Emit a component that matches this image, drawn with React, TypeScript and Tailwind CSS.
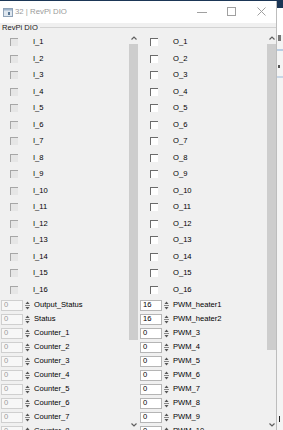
import React from "react";

const inputs = Array.from({ length: 16 }, (_, i) => `I_${i + 1}`);
const outputs = Array.from({ length: 16 }, (_, i) => `O_${i + 1}`);
const leftSpins = [
  "Output_Status",
  "Status",
  ...Array.from({ length: 8 }, (_, i) => `Counter_${i + 1}`),
];
const rightSpins = [
  { name: "PWM_heater1", value: "16" },
  { name: "PWM_heater2", value: "16" },
  ...Array.from({ length: 8 }, (_, i) => ({ name: `PWM_${i + 3}`, value: "0" })),
];

const Chevron: React.FC<{ down?: boolean }> = ({ down }) => (
  <svg width="6" height="4" viewBox="0 0 6 4" className="block">
    <polyline
      points={down ? "0.5,0.5 3,3 5.5,0.5" : "0.5,3.5 3,1 5.5,3.5"}
      fill="none"
      stroke="#606060"
      strokeWidth="1.2"
    />
  </svg>
);

const SpinArrows: React.FC = () => (
  <svg width="7" height="11" viewBox="0 0 7 11" className="block">
    <polygon points="3.5,1.5 1.5,4 5.5,4" fill="#555" />
    <line x1="1" y1="5.5" x2="6" y2="5.5" stroke="#8a8a8a" strokeWidth="1" />
    <polygon points="3.5,9.5 1.5,7 5.5,7" fill="#555" />
  </svg>
);

const Scrollbar: React.FC<{ thumbEnd: string }> = ({ thumbEnd }) => (
  <div className="w-[9px] flex flex-col bg-[#f0f0f0]">
    <div className="h-[12px] flex items-center justify-center">
      <Chevron />
    </div>
    <div className={`${thumbEnd} bg-[#cdcdcd]`} />
    <div className="flex-1" />
    <div className="h-[11px] flex items-center justify-center">
      <Chevron down />
    </div>
  </div>
);

const CheckRow: React.FC<{ label: string; enabled?: boolean; boxMl: string; labelMl: string }> = ({
  label,
  enabled,
  boxMl,
  labelMl,
}) => (
  <div className="h-[16.5px] flex items-center">
    <div
      className={
        enabled
          ? `${boxMl} w-[8px] h-[8px] border-t border-l border-[#6b6b6b] bg-white`
          : `${boxMl} w-[8px] h-[8px] border-t border-l border-[#a6a6a6] bg-[#e6e6e6]`
      }
    />
    <span className={`${labelMl} text-black`}>{label}</span>
  </div>
);

const SpinRow: React.FC<{ label: string; value: string; enabled?: boolean }> = ({
  label,
  value,
  enabled,
}) => (
  <div className="h-[14px] flex items-center">
    <div
      className={
        enabled
          ? "ml-[1px] w-[22px] h-[11px] border border-[#b5b5b5] bg-white flex items-center pl-[2px] text-black"
          : "ml-[1px] w-[22px] h-[11px] border border-[#cfcfcf] bg-[#f7f7f7] flex items-center pl-[2px] text-[#9a9a9a]"
      }
    >
      {value}
    </div>
    <div className="w-[7px] h-[11px] ml-[1px]">
      <SpinArrows />
    </div>
    <span className="ml-[3px] text-black whitespace-nowrap">{label}</span>
  </div>
);

const App: React.FC = () => {
  return (
    <div
      className="w-[283px] h-[430px] overflow-hidden flex bg-[#1b3656] text-[7.6px] leading-none"
      style={{ fontFamily: '"Liberation Sans", Arial, sans-serif' }}
    >
      <div className="w-[277px] mt-[1px] flex flex-col bg-[#f0f0f0] border-r border-[#bdbdbd]">
        {/* title bar */}
        <div className="h-[22px] bg-white flex items-center shrink-0">
          <svg width="10" height="9" viewBox="0 0 10 9" className="ml-[3px]">
            <rect x="0.5" y="0.5" width="9" height="8" fill="#dfe7ef" stroke="#8fa3b8" />
            <rect x="1" y="1" width="8" height="1.5" fill="#9db4cc" />
            <rect x="5" y="4" width="2" height="3" fill="#5a7896" />
          </svg>
          <span className="ml-[2px] text-[#9a9a9a] text-[7.8px]">32 | RevPi DIO</span>
          <div className="flex-1" />
          <svg width="11" height="10" viewBox="0 0 11 10" className="mr-[19px]">
            <line x1="0" y1="5.5" x2="10" y2="5.5" stroke="#a0a0a0" strokeWidth="1" />
          </svg>
          <svg width="10" height="10" viewBox="0 0 10 10" className="mr-[20px]">
            <rect x="0.5" y="0.5" width="8" height="8" fill="none" stroke="#a0a0a0" strokeWidth="1" />
          </svg>
          <svg width="10" height="10" viewBox="0 0 10 10" className="mr-[9px]">
            <line x1="0.5" y1="0.5" x2="8.5" y2="8.5" stroke="#a0a0a0" strokeWidth="1" />
            <line x1="8.5" y1="0.5" x2="0.5" y2="8.5" stroke="#a0a0a0" strokeWidth="1" />
          </svg>
        </div>

        {/* group box header */}
        <div className="h-[9px] flex items-center shrink-0">
          <span className="ml-[2px] text-[#1a1a1a]">RevPi DIO</span>
          <div className="flex-1 ml-[2px] h-px bg-[#d2d2d2]" />
        </div>

        {/* panes */}
        <div className="flex-1 flex min-h-0">
          <div className="w-[138px] flex">
            <div className="flex-1 overflow-hidden pt-[2px]">
              {inputs.map((n) => (
                <CheckRow key={n} label={n} boxMl="ml-[10px]" labelMl="ml-[15px]" />
              ))}
              {leftSpins.map((n) => (
                <SpinRow key={n} label={n} value="0" />
              ))}
            </div>
            <Scrollbar thumbEnd="h-[296px]" />
          </div>
          <div className="w-[1px]" />
          <div className="flex-1 flex">
            <div className="flex-1 overflow-hidden pt-[2px]">
              {outputs.map((n) => (
                <CheckRow key={n} label={n} enabled boxMl="ml-[11px]" labelMl="ml-[15px]" />
              ))}
              {rightSpins.map((s) => (
                <SpinRow key={s.name} label={s.name} value={s.value} enabled />
              ))}
            </div>
            <Scrollbar thumbEnd="h-[306px]" />
          </div>
        </div>
      </div>

      {/* neighbouring window peeking in */}
      <div className="flex-1 flex flex-col">
        <div className="h-[8px]" />
        <div className="flex-1 bg-[#f4f4f4] flex flex-col">
          <div className="h-[27px] bg-white" />
          <div className="h-[6px] w-[3px] ml-[1px] bg-[#777]" />
          <div className="h-[8px]" />
          <div className="h-[2px] bg-[#b9cde3]" />
          <div className="h-[14px]" />
          <div className="h-[3px] w-[2px] ml-[1px] bg-[#555]" />
          <div className="h-[8px]" />
          <div className="h-[2px] bg-[#c8d6e6]" />
          <div className="flex-1" />
          <div className="h-[6px] w-[1px] ml-[2px] bg-[#222]" />
          <div className="h-[8px]" />
        </div>
      </div>
    </div>
  );
};

export default App;
